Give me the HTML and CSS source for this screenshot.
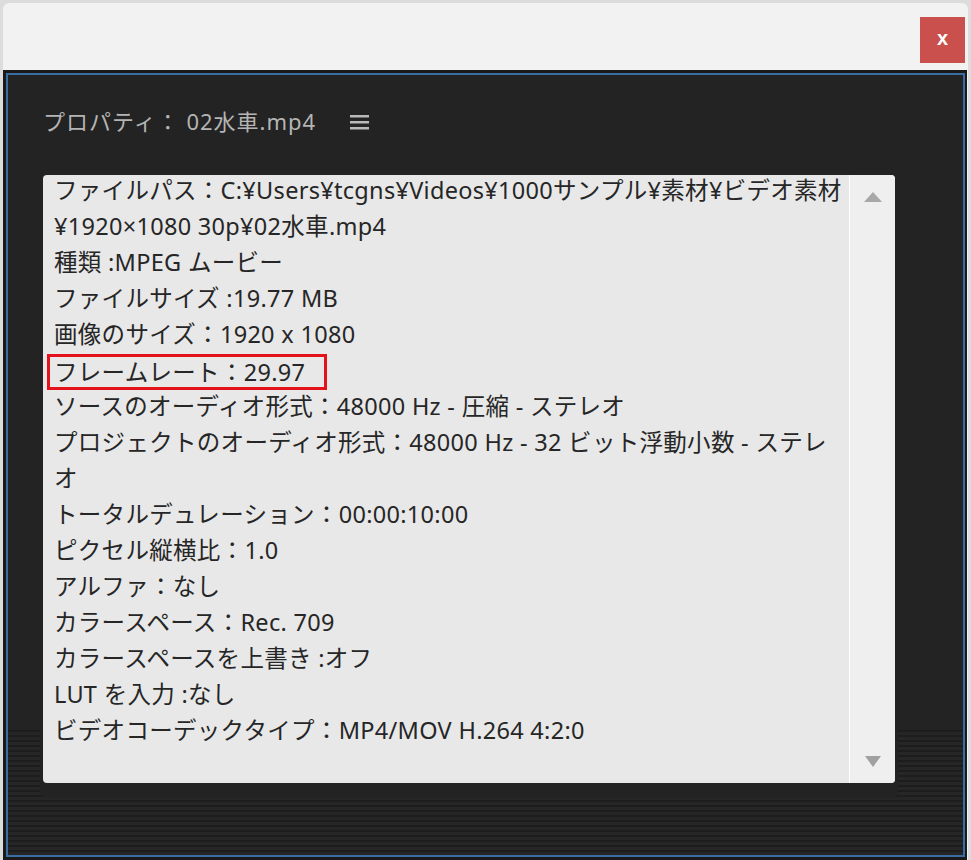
FILE: index.html
```html
<!DOCTYPE html>
<html lang="ja">
<head>
    <meta charset="UTF-8">
    <title>プロパティ</title>
    <link rel="stylesheet" href="styles.css">
</head>
<body>
    <div class="dialog">
        <div class="titlebar">
            <button class="close-button">x</button>
        </div>
        <div class="panel">
            <div class="panel-inner">
                <div class="panel-header">
                    <span class="panel-title">プロパティ： 02水車.mp4</span>
                    <span class="menu-icon">
                        <svg width="19" height="16" viewBox="0 0 19 16">
                            <rect x="0" y="1" width="19" height="2.5" fill="#b8b8b8"/>
                            <rect x="0" y="7" width="19" height="2.5" fill="#b8b8b8"/>
                            <rect x="0" y="13" width="19" height="2.5" fill="#b8b8b8"/>
                        </svg>
                    </span>
                </div>
                <div class="info-box">
                    <div class="info-list">
                        <div class="info-line">ファイルパス：C:¥Users¥tcgns¥Videos¥1000サンプル¥素材¥ビデオ素材¥1920×1080 30p¥02水車.mp4</div>
                        <div class="info-line">種類 :MPEG ムービー</div>
                        <div class="info-line">ファイルサイズ :19.77 MB</div>
                        <div class="info-line">画像のサイズ：1920 x 1080</div>
                        <div class="info-line"><span class="highlight">フレームレート：29.97</span></div>
                        <div class="info-line">ソースのオーディオ形式：48000 Hz - 圧縮 - ステレオ</div>
                        <div class="info-line">プロジェクトのオーディオ形式：48000 Hz - 32 ビット浮動小数 - ステレオ</div>
                        <div class="info-line">トータルデュレーション：00:00:10:00</div>
                        <div class="info-line">ピクセル縦横比：1.0</div>
                        <div class="info-line">アルファ：なし</div>
                        <div class="info-line">カラースペース：Rec. 709</div>
                        <div class="info-line">カラースペースを上書き :オフ</div>
                        <div class="info-line">LUT を入力 :なし</div>
                        <div class="info-line">ビデオコーデックタイプ：MP4/MOV H.264 4:2:0</div>
                    </div>
                    <div class="scroll-track">
                        <span class="arrow-up"></span>
                        <span class="arrow-down"></span>
                    </div>
                </div>
            </div>
        </div>
    </div>
</body>
</html>
```

FILE: styles.css
```css
body {
    margin: 0;
    background-color: #dcdcdc;
    font-family: "Noto Sans", "Noto Sans CJK JP", sans-serif;
}
.dialog {
    width: 965px;
    height: 857px;
    margin: 3px 0 0 3px;
    background-color: #f2f2f2;
    border-radius: 6px 6px 0 0;
    display: flex;
    flex-direction: column;
}
.titlebar {
    height: 67px;
    display: flex;
    justify-content: flex-end;
    align-items: flex-start;
    padding: 14px 3px 0 0;
    box-sizing: border-box;
}
.close-button {
    width: 45px;
    height: 46px;
    border: none;
    background-color: #c9504c;
    color: white;
    font-family: "Liberation Sans", Arial, sans-serif;
    font-size: 20px;
    font-weight: bold;
    padding: 0 0 4px 0;
}
.panel {
    flex: 1;
    background-color: #1a1a1a;
    padding: 3px 2px 3px 3px;
    margin-right: 1px;
    display: flex;
}
.panel-inner {
    flex: 1;
    border: 2px solid #3b6da3;
    background-color: #232323;
    background-image: repeating-linear-gradient(to bottom, #1d1d1d 0, #1d1d1d 2px, #262626 2px, #262626 5px);
    background-size: 100% 125px;
    background-position: bottom;
    background-repeat: no-repeat;
    padding: 0 0 0 35px;
}
.panel-header {
    height: 100px;
    display: flex;
    align-items: center;
    padding-bottom: 10px;
    box-sizing: border-box;
}
.panel-title {
    color: #b4b4b4;
    font-size: 22px;
    letter-spacing: 1px;
}
.menu-icon {
    margin-left: 34px;
    display: flex;
    padding-top: 4px;
}
.info-box {
    width: 852px;
    height: 608px;
    background-color: #e8e8e8;
    border-radius: 4px;
    display: flex;
    box-shadow: 0 12px 0 3px #232323;
}
.info-list {
    flex: 1;
    padding: 0 0 0 11px;
    color: #262626;
    font-size: 23.5px;
    letter-spacing: 0.3px;
    line-height: 36px;
    margin-top: -3px;
}
.info-line {
    padding-right: 2px;
}
.highlight {
    display: inline-block;
    border: 3px solid #e3121b;
    line-height: 30px;
    margin-left: -7px;
    padding: 0 19px 0 4px;
    position: relative;
    top: 2px;
}
.scroll-track {
    width: 45px;
    border-left: 1px solid #ffffff;
    background-color: #efefef;
    border-radius: 0 4px 4px 0;
    display: flex;
    flex-direction: column;
    justify-content: space-between;
    align-items: center;
    padding: 17px 0 16px 0;
}
.arrow-up {
    width: 0;
    height: 0;
    border-left: 9px solid transparent;
    border-right: 9px solid transparent;
    border-bottom: 10px solid #a8a8a8;
}
.arrow-down {
    width: 0;
    height: 0;
    border-left: 8px solid transparent;
    border-right: 8px solid transparent;
    border-top: 11px solid #a0a0a0;
}
```
